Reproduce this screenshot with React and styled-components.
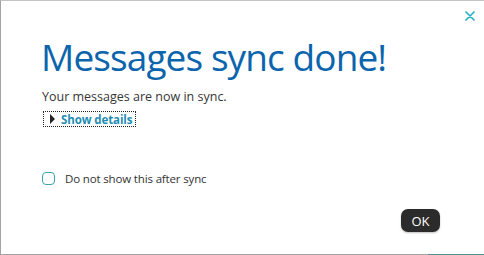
import React, { useState } from "react";
import styled, { createGlobalStyle } from "styled-components";

const GlobalStyle = createGlobalStyle`
  html, body {
    margin: 0;
    padding: 0;
    background: #ffffff;
  }
  body {
    font-family: "Open Sans", "Noto Sans", "Liberation Sans", sans-serif;
  }
`;

const Dialog = styled.div`
  width: 484px;
  height: 255px;
  box-sizing: border-box;
  display: flex;
  flex-direction: column;
  background: #ffffff;
  border-left: 1px solid #a3a3a3;
  border-top: 1px solid #c4c4c4;
  overflow: hidden;
`;

const TopBar = styled.div`
  display: flex;
  justify-content: flex-end;
  padding: 10px 9px 0 0;
  height: 11px;
`;

const CloseButton = styled.button`
  border: none;
  background: none;
  padding: 0;
  width: 10px;
  height: 10px;
  cursor: pointer;
  display: flex;
  svg {
    display: block;
  }
`;

const Body = styled.div`
  flex: 1;
  display: flex;
  flex-direction: column;
  padding-left: 40px;
`;

const Title = styled.h1`
  margin: 10px 0 0 0;
  font-weight: 400;
  font-size: 37px;
  line-height: 50px;
  color: #0b65ad;
  letter-spacing: -0.9px;
`;

const Text = styled.p`
  margin: 7px 0 0 1px;
  font-size: 12.5px;
  line-height: 16px;
  color: #363636;
`;

const DetailsToggle = styled.button`
  align-self: flex-start;
  margin: 6px 0 0 2px;
  display: flex;
  align-items: center;
  gap: 6px;
  padding: 0 3px 0 6px;
  height: 16px;
  box-sizing: border-box;
  border: 1px dotted #222222;
  background: none;
  font-family: inherit;
  font-size: 11.5px;
  font-weight: 700;
  letter-spacing: -0.1px;
  color: #1f8db3;
  cursor: pointer;
`;

const Arrow = styled.span`
  width: 0;
  height: 0;
  border-top: 5px solid transparent;
  border-bottom: 5px solid transparent;
  border-left: 5px solid #222222;
`;

const CheckRow = styled.label`
  margin: 44px 0 0 1px;
  display: flex;
  align-items: center;
  gap: 10px;
  font-size: 11.5px;
  letter-spacing: -0.15px;
  color: #333333;
  cursor: pointer;
`;

const Box = styled.span`
  width: 13px;
  height: 13px;
  box-sizing: border-box;
  border: 1.5px solid #3aa2ab;
  border-radius: 4px;
  background: ${(p) => (p.checked ? "#3aa2ab" : "#ffffff")};
`;

const Footer = styled.div`
  display: flex;
  justify-content: flex-end;
  padding: 0 44px 22px 0;
`;

const OkButton = styled.button`
  width: 39px;
  height: 23px;
  border: none;
  border-radius: 7px;
  background: #2b2b2b;
  color: #ffffff;
  font-family: inherit;
  font-size: 13px;
  padding: 0;
  cursor: pointer;
  box-shadow: 0 1px 2px rgba(0, 0, 0, 0.25);
`;

const BottomEdge = styled.div`
  display: flex;
  height: 1px;
`;

const EdgePart = styled.div`
  flex: ${(p) => (p.grow ? 1 : "none")};
  width: ${(p) => (p.width ? `${p.width}px` : "auto")};
  background: ${(p) => p.color};
`;

const App = () => {
  const [checked, setChecked] = useState(false);
  return (
    <>
      <GlobalStyle />
      <Dialog>
        <TopBar>
          <CloseButton aria-label="Close">
            <svg width="10" height="10" viewBox="0 0 10 10">
              <path
                d="M1 1 L9 9 M9 1 L1 9"
                stroke="#27b0c6"
                strokeWidth="1.7"
                strokeLinecap="round"
              />
            </svg>
          </CloseButton>
        </TopBar>
        <Body>
          <Title>Messages sync done!</Title>
          <Text>Your messages are now in sync.</Text>
          <DetailsToggle>
            <Arrow />
            Show details
          </DetailsToggle>
          <CheckRow onClick={() => setChecked(!checked)}>
            <Box checked={checked} />
            Do not show this after sync
          </CheckRow>
        </Body>
        <Footer>
          <OkButton>OK</OkButton>
        </Footer>
        <BottomEdge>
          <EdgePart grow color="#a3a3a3" />
          <EdgePart width={56} color="#4f8f93" />
        </BottomEdge>
      </Dialog>
    </>
  );
};

export default App;
